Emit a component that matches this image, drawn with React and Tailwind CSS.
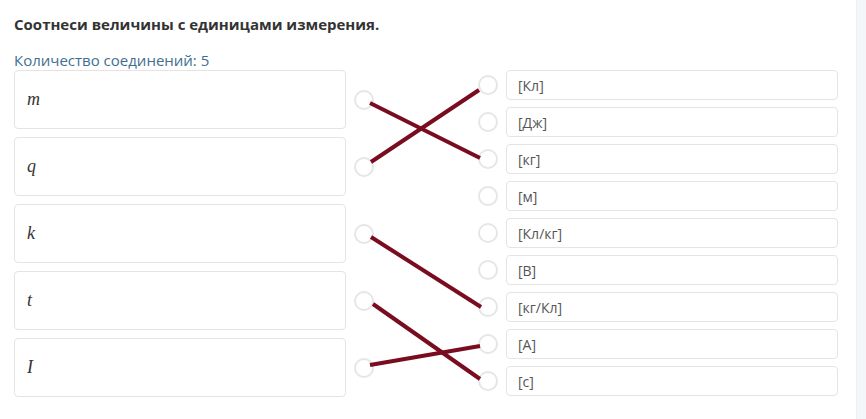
import React from 'react'

const left = ['m', 'q', 'k', 't', 'I']
const right = ['[Кл]', '[Дж]', '[кг]', '[м]', '[Кл/кг]', '[В]', '[кг/Кл]', '[А]', '[с]']

// connections drawn over the board, page coordinates
const links = [
  [370, 103, 480, 158],
  [371, 162, 479, 90],
  [371, 237, 481, 307],
  [373, 304, 480, 379],
  [370, 365, 480, 346],
]

function Dot() {
  return <div className="w-5 h-5 rounded-full border-2 border-[#e6e6e6] bg-white flex-shrink-0" />
}

export default function App() {
  return (
    <div className="relative w-[866px] h-[419px] bg-white overflow-hidden flex" style={{ fontFamily: '"Open Sans", "Noto Sans", sans-serif' }}>
      <div className="flex-1 pl-[14px] pt-[14px]">
        <div className="text-[15px] leading-5 font-bold text-[#333]">Соотнеси величины с единицами измерения.</div>
        <div className="mt-4 text-[15px] leading-5 text-[#3f6f8f]">Количество соединений: 5</div>

        <div className="flex">
          {/* Left column */}
          <div className="flex flex-col gap-2 w-[332px]">
            {left.map((v) => (
              <div key={v} className="h-[59px] border border-[#e4e4e4] rounded flex items-center px-3">
                <span className="text-[18px] italic text-[#333]" style={{ fontFamily: '"Liberation Serif", "DejaVu Serif", serif' }}>{v}</span>
              </div>
            ))}
          </div>

          {/* Left dots */}
          <div className="flex flex-col gap-2 ml-2">
            {left.map((v) => (
              <div key={v} className="h-[59px] flex items-center">
                <Dot />
              </div>
            ))}
          </div>

          {/* Right column */}
          <div className="flex flex-col gap-[7px] ml-[104px]">
            {right.map((u) => (
              <div key={u} className="flex items-center gap-2 h-[30px]">
                <Dot />
                <div className="w-[332px] h-[30px] border border-[#e4e4e4] rounded flex items-center px-[11px] text-[14px] text-[#555]">
                  {u}
                </div>
              </div>
            ))}
          </div>
        </div>
      </div>

      <div className="w-[10px] bg-[#f4f6f9] border-l border-[#eceff3]" />

      <svg className="absolute inset-0 pointer-events-none" width="866" height="419">
        {links.map(([x1, y1, x2, y2], i) => (
          <line key={i} x1={x1} y1={y1} x2={x2} y2={y2} stroke="#7a0c1f" strokeWidth="4" />
        ))}
      </svg>
    </div>
  )
}
